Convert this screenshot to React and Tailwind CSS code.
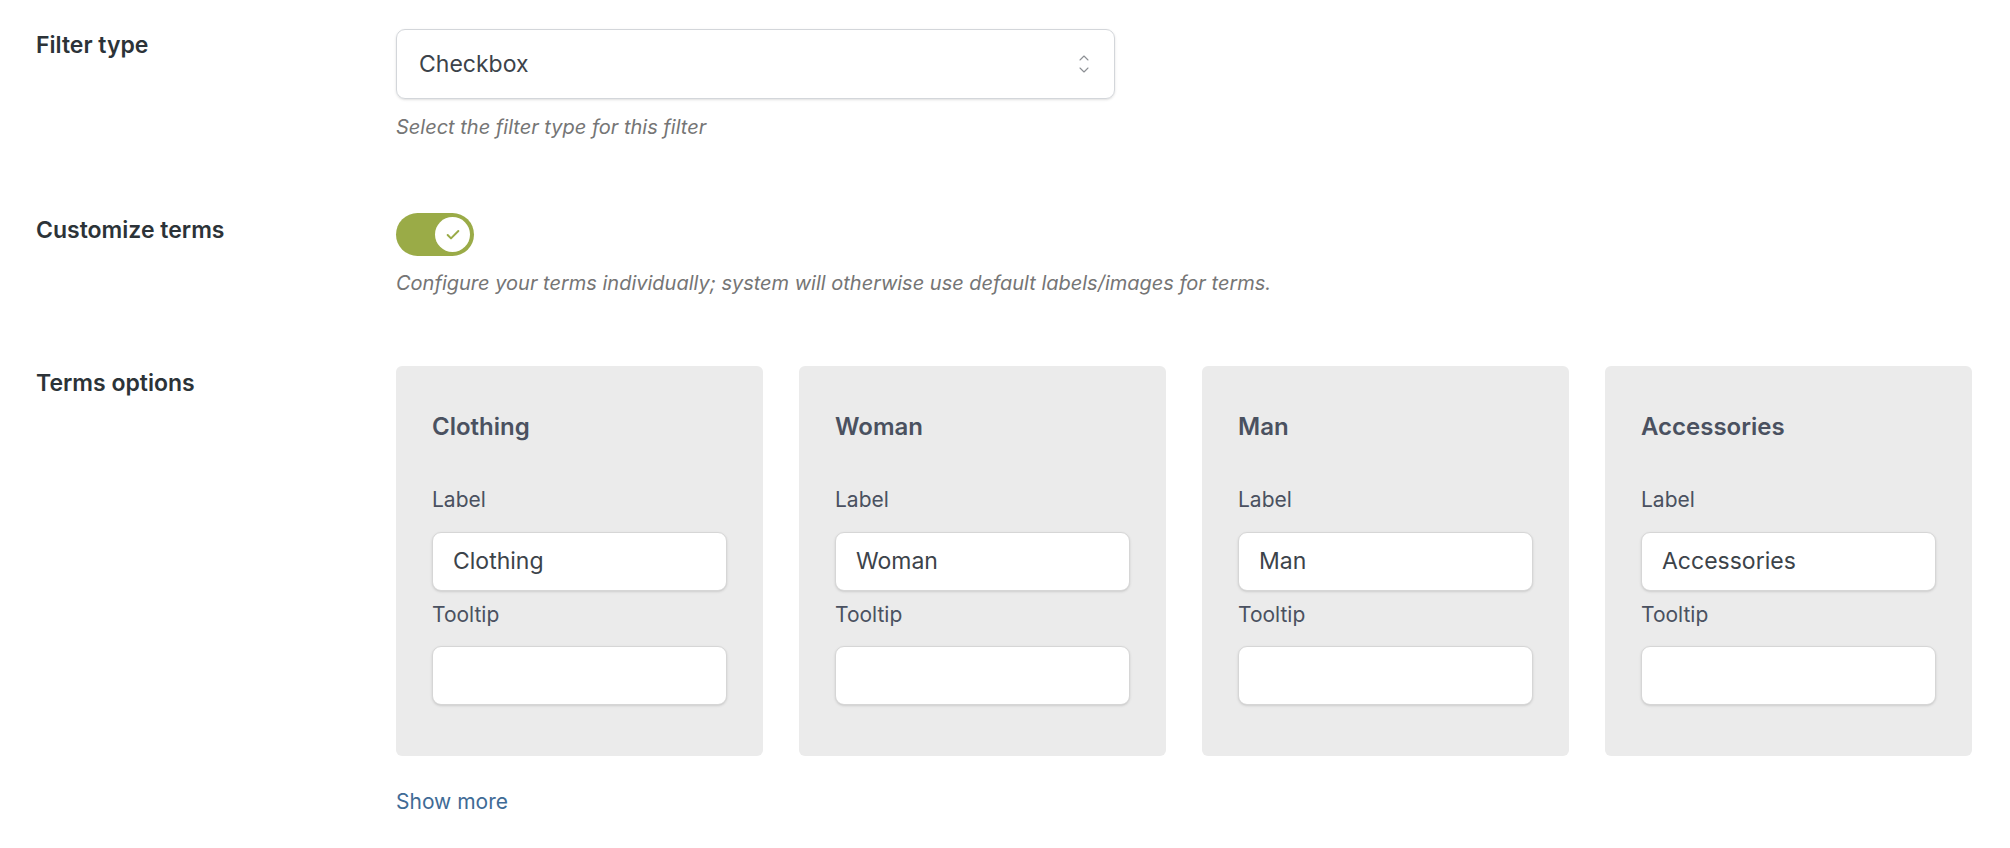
import { ChevronUp, ChevronDown, Check } from 'lucide-react'

const TERMS = ['Clothing', 'Woman', 'Man', 'Accessories']

function Row({ label, children, className = '' }) {
  return (
    <div className={`flex ${className}`}>
      <div className="w-[396px] shrink-0 pl-[36px] text-[23px] font-semibold text-[#2c3338]">{label}</div>
      <div className="flex-1">{children}</div>
    </div>
  )
}

function TermCard({ name }) {
  return (
    <div className="w-[367px] h-[390px] bg-[#ebebeb] rounded-[6px] px-[36px] pt-[46px]">
      <div className="text-[24px] font-semibold text-[#4a5160] leading-[30px]">{name}</div>
      <div className="mt-[44px] text-[21px] text-[#4a5160] leading-[28px]">Label</div>
      <div className="mt-[18px] h-[59px] bg-white border border-[#d6d6d6] rounded-[9px] flex items-center px-[20px] text-[23px] text-[#3c434a] shadow-sm">
        {name}
      </div>
      <div className="mt-[10px] text-[21px] text-[#4a5160] leading-[28px]">Tooltip</div>
      <div className="mt-[17px] h-[59px] bg-white border border-[#d6d6d6] rounded-[9px] shadow-sm" />
    </div>
  )
}

export default function App() {
  return (
    <div className="w-[2010px] h-[848px] bg-white font-[Inter,sans-serif]">
      <Row label={<div className="pt-[28px]">Filter type</div>}>
        <div className="pt-[29px]">
          <div className="w-[719px] h-[70px] border border-[#d3d6da] rounded-[9px] flex items-center justify-between px-[22px] text-[23px] text-[#3c434a] shadow-sm">
            <span>Checkbox</span>
            <span className="flex flex-col text-[#8c8f94] -space-y-[4px]">
              <ChevronUp size={16} strokeWidth={1.6} />
              <ChevronDown size={16} strokeWidth={1.6} />
            </span>
          </div>
          <div className="mt-[13px] text-[20px] italic text-[#757575]">Select the filter type for this filter</div>
        </div>
      </Row>

      <Row className="mt-[71px]" label={<div>Customize terms</div>}>
        <div>
          <div className="w-[78px] h-[43px] rounded-full bg-[#9aab47] flex items-center justify-end pr-[4px]">
            <div className="w-[35px] h-[35px] rounded-full bg-white flex items-center justify-center">
              <Check size={16} strokeWidth={3} className="text-[#9aab47]" />
            </div>
          </div>
          <div className="mt-[12px] text-[20px] italic text-[#757575]">
            Configure your terms individually; system will otherwise use default labels/images for terms.
          </div>
        </div>
      </Row>

      <Row className="mt-[68px]" label={<div>Terms options</div>}>
        <div className="flex gap-[36px]">
          {TERMS.map(t => <TermCard key={t} name={t} />)}
        </div>
        <div className="mt-[30px] text-[21px] text-[#3f6b96]">Show more</div>
      </Row>
    </div>
  )
}
